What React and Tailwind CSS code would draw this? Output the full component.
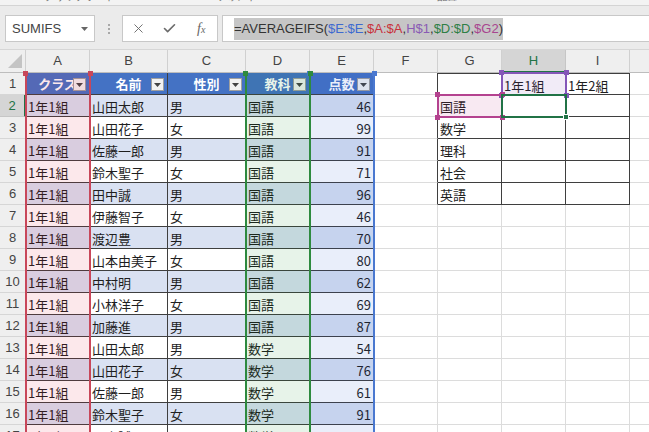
import React from "react";
import { X, Check } from "lucide-react";

const COLS = ["A", "B", "C", "D", "E", "F", "G", "H", "I", "J"];
const TABLE_COLS = ["A", "B", "C", "D", "E"];
const HEADERS = { A: "クラス", B: "名前", C: "性別", D: "教科", E: "点数" };

// 名前, 性別, 教科, 点数 (rows 2..17)
const DATA = [
  ["山田太郎", "男", "国語", 46],
  ["山田花子", "女", "国語", 99],
  ["佐藤一郎", "男", "国語", 91],
  ["鈴木聖子", "女", "国語", 71],
  ["田中誠", "男", "国語", 96],
  ["伊藤智子", "女", "国語", 46],
  ["渡辺豊", "男", "国語", 70],
  ["山本由美子", "女", "国語", 80],
  ["中村明", "男", "国語", 62],
  ["小林洋子", "女", "国語", 69],
  ["加藤進", "男", "国語", 87],
  ["山田太郎", "男", "数学", 54],
  ["山田花子", "女", "数学", 76],
  ["佐藤一郎", "男", "数学", 61],
  ["鈴木聖子", "女", "数学", 91],
  ["田中誠", "男", "数学", 83],
];

const SUBJECTS = ["国語", "数学", "理科", "社会", "英語"];

function Ribbon() {
  return (
    <div className="h-[6px] bg-[#f3f3f3] border-b border-[#d4d4d4] overflow-hidden flex items-start text-[10px] leading-[12px] text-[#666]">
      <span className="ml-[45px] -mt-[9px]">クリップボード</span>
      <span className="ml-[18px] -mt-[9px]">↘</span>
      <span className="ml-[76px] -mt-[9px]">フォント</span>
      <span className="ml-[80px] -mt-[9px]">↘</span>
      <span className="ml-[92px] -mt-[9px]">配置</span>
    </div>
  );
}

function FormulaBar() {
  return (
    <div className="h-[44px] bg-[#ebebeb] flex items-start pt-[9px] border-b border-[#d6d6d6]">
      <div className="ml-[5px] w-[90px] h-[27px] bg-white border border-[#c8c8c8] flex items-center justify-between pl-[6px] pr-[6px] text-[13px] text-[#444]">
        <span>SUMIFS</span>
        <svg width="7" height="4" viewBox="0 0 7 4">
          <polygon points="0,0 7,0 3.5,4" fill="#666" />
        </svg>
      </div>
      <div className="w-[27px] h-[27px] flex flex-col items-center justify-center gap-[2px]">
        <span className="w-[2px] h-[2px] bg-[#a8a8a8]" />
        <span className="w-[2px] h-[2px] bg-[#a8a8a8]" />
        <span className="w-[2px] h-[2px] bg-[#a8a8a8]" />
      </div>
      <div className="w-[96px] h-[27px] bg-white border border-[#c8c8c8] flex items-center">
        <div className="w-[32px] flex justify-center">
          <X size={15} strokeWidth={1.5} color="#6b6b6b" />
        </div>
        <div className="w-[31px] flex justify-center">
          <Check size={15} strokeWidth={2.6} color="#6b6b6b" />
        </div>
        <div className="w-[32px] flex justify-center font-['Liberation_Serif',serif] italic text-[14px] text-[#666]">
          f<span className="text-[10px] mt-[4px]">x</span>
        </div>
      </div>
      <div className="ml-[4px] flex-1 h-[27px] bg-white border border-[#c8c8c8] border-r-0 flex items-center pl-[11px]">
        <span className="bg-[#c6c6c6] h-[22px] flex items-center text-[13px] text-[#333] font-['Liberation_Sans',sans-serif]">
          =AVERAGEIFS(
          <span className="text-[#3d6ad0]">$E:$E</span>,
          <span className="text-[#c8323c]">$A:$A</span>,
          <span className="text-[#8a5bb4]">H$1</span>,
          <span className="text-[#2f7f45]">$D:$D</span>,
          <span className="text-[#a8458f]">$G2</span>)
        </span>
      </div>
    </div>
  );
}

function FilterButton() {
  return (
    <div className="absolute right-[3px] bottom-[3px] w-[13px] h-[13px] bg-[#f2f2f2] border border-[#a0a0a0] flex items-center justify-center">
      <svg width="7" height="4" viewBox="0 0 7 4">
        <polygon points="0,0 7,0 3.5,4" fill="#444" />
      </svg>
    </div>
  );
}

function Cell({ r, c }) {
  const base = "flex items-center px-[2px] pt-[2px] leading-none whitespace-nowrap overflow-hidden";
  if (TABLE_COLS.includes(c)) {
    if (r === 1) {
      return (
        <div className="relative flex items-center justify-center pt-[1px] bg-[#4472c4] text-white font-bold border-r border-b border-[#3f3f3f] whitespace-nowrap overflow-hidden">
          {HEADERS[c]}
          <FilterButton />
        </div>
      );
    }
    const d = DATA[r - 2];
    const band = r % 2 === 0 ? "bg-[#d9e1f2]" : "bg-white";
    const text = c === "A" ? "1年1組" : c === "B" ? d[0] : c === "C" ? d[1] : c === "D" ? d[2] : d[3];
    const align = c === "E" ? "justify-end" : "justify-start";
    return <div className={`${base} ${band} ${align} border-r border-b border-[#3f3f3f]`}>{text}</div>;
  }
  if (c === "F" && r <= 6) {
    return <div className={`${base} bg-white border-r border-b border-b-[#dcdcdc] border-r-[#3f3f3f]`} />;
  }
  if ((c === "G" || c === "H" || c === "I") && r <= 6) {
    let text = "";
    if (c === "G" && r >= 2) text = SUBJECTS[r - 2];
    if (c === "H" && r === 1) text = "1年1組";
    if (c === "I" && r === 1) text = "1年2組";
    const top = r === 1 ? "border-t" : "";
    return <div className={`${base} bg-white border-r border-b border-[#3f3f3f] ${top}`}>{text}</div>;
  }
  return <div className="bg-white border-r border-b border-[#dcdcdc]" />;
}

function Range({ className, children }) {
  return <div className={`absolute pointer-events-none ${className}`}>{children}</div>;
}

function Handle({ className }) {
  return <span className={`absolute w-[5px] h-[5px] ${className}`} />;
}

function Sheet() {
  const cells = [];
  cells.push(
    <div key="corner" className="relative bg-[#efefef] border-r border-b border-r-[#d0d0d0] border-b-[#bdbdbd]">
      <svg className="absolute right-[3px] bottom-[4px]" width="14" height="14" viewBox="0 0 14 14">
        <polygon points="14,0 14,14 0,14" fill="#c4c4c4" />
      </svg>
    </div>
  );
  COLS.forEach((c) =>
    cells.push(
      <div
        key={"h" + c}
        className={
          c === "H"
            ? "flex items-center justify-center bg-[#d5d5d5] text-[#217346] border-r border-r-[#c6c6c6] border-b-2 border-b-[#217346] font-['Liberation_Sans',sans-serif] text-[13px]"
            : "flex items-center justify-center bg-[#efefef] text-[#444] border-r border-b border-r-[#d0d0d0] border-b-[#bdbdbd] font-['Liberation_Sans',sans-serif] text-[13px]"
        }
      >
        {c}
      </div>
    )
  );
  for (let r = 1; r <= 17; r++) {
    cells.push(
      <div
        key={"r" + r}
        className={
          r === 2
            ? "flex items-center justify-center pt-[1px] bg-[#d5d5d5] text-[#217346] border-b border-b-[#c6c6c6] border-r-2 border-r-[#217346] font-['Liberation_Sans',sans-serif] text-[13px]"
            : "flex items-center justify-center pt-[1px] bg-[#efefef] text-[#444] border-b border-r border-b-[#d6d6d6] border-r-[#bdbdbd] font-['Liberation_Sans',sans-serif] text-[13px]"
        }
      >
        {r}
      </div>
    );
    COLS.forEach((c) => cells.push(<Cell key={c + r} r={r} c={c} />));
  }

  return (
    <div className="relative h-[382px] overflow-hidden">
      <div className="grid grid-cols-[26px_64px_78px_78px_64px_64px_64px_64px_64px_64px_64px] grid-rows-[23px_repeat(17,22px)] text-[13px] text-[#1e1e1e] font-['Noto_Sans_CJK_JP','Noto_Sans',sans-serif]">
        {cells}
      </div>

      <Range className="left-[309px] top-[23px] w-[66px] bottom-0 border-x-2 border-[#4a78d0] bg-[rgba(40,90,210,0.1)]">
        <Handle className="-left-[4px] -top-[2px] bg-[#4a78d0]" />
        <Handle className="-right-[4px] -top-[2px] bg-[#4a78d0]" />
      </Range>
      <Range className="left-[25px] top-[23px] w-[66px] bottom-0 border-x-2 border-[#c8475a] bg-[rgba(225,30,60,0.1)]">
        <Handle className="-left-[4px] -top-[2px] bg-[#c8475a]" />
        <Handle className="-right-[4px] -top-[2px] bg-[#c8475a]" />
      </Range>
      <Range className="left-[245px] top-[23px] w-[66px] bottom-0 border-x-2 border-[#2e8a3f] bg-[rgba(20,140,40,0.1)]">
        <Handle className="-left-[4px] -top-[2px] bg-[#2e8a3f]" />
        <Handle className="-right-[4px] -top-[2px] bg-[#2e8a3f]" />
      </Range>
      <Range className="left-[501px] top-[22px] w-[66px] h-[24px] border-2 border-[#8456b8] bg-[rgba(120,60,180,0.1)]">
        <Handle className="-left-[4px] -top-[4px] bg-[#8456b8]" />
        <Handle className="-right-[4px] -top-[4px] bg-[#8456b8]" />
        <Handle className="-left-[4px] -bottom-[4px] bg-[#8456b8]" />
        <Handle className="-right-[4px] -bottom-[4px] bg-[#8456b8]" />
      </Range>
      <Range className="left-[437px] top-[44px] w-[66px] h-[24px] border-2 border-[#b4428f] bg-[rgba(190,40,130,0.1)]">
        <Handle className="-left-[4px] -top-[4px] bg-[#b4428f]" />
        <Handle className="-right-[4px] -top-[4px] bg-[#b4428f]" />
        <Handle className="-left-[4px] -bottom-[4px] bg-[#b4428f]" />
        <Handle className="-right-[4px] -bottom-[4px] bg-[#b4428f]" />
      </Range>
      <Range className="left-[501px] top-[44px] w-[66px] h-[24px] border-2 border-[#217346]">
        <span className="absolute -right-[4px] -bottom-[4px] w-[6px] h-[6px] bg-[#217346] border border-white" />
      </Range>
    </div>
  );
}

export default function App() {
  return (
    <div className="w-[649px] h-[432px] overflow-hidden bg-white font-['Liberation_Sans',sans-serif]">
      <Ribbon />
      <FormulaBar />
      <Sheet />
    </div>
  );
}
